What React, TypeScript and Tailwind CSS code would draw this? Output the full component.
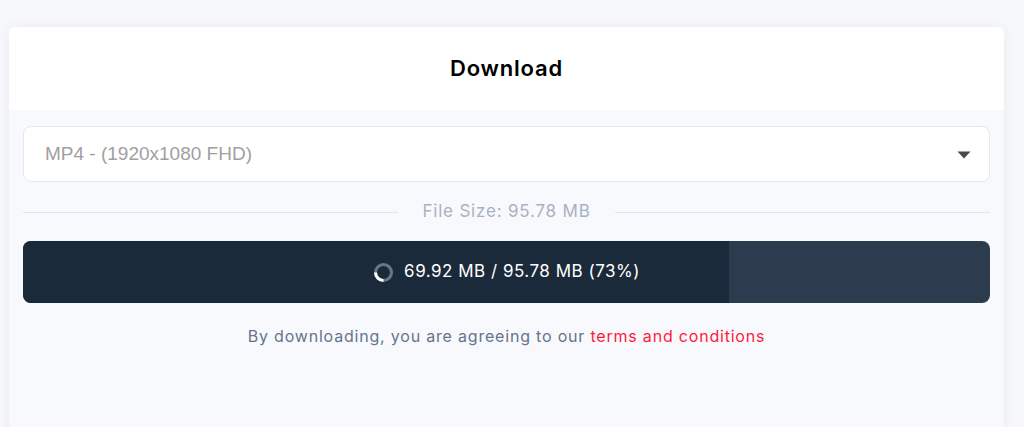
const sans = { fontFamily: "Inter, 'Open Sans', sans-serif" };

function Spinner() {
  return (
    <svg width="21" height="21" viewBox="0 0 21 21" className="shrink-0">
      <circle cx="10.5" cy="10.5" r="8" fill="none" stroke="#6b7684" strokeWidth="3" />
      <path d="M2.5 10.5 A8 8 0 0 0 10.5 18.5" fill="none" stroke="#ffffff" strokeWidth="3" />
    </svg>
  );
}

export default function App() {
  const percent = 73;
  return (
    <div className="w-[1024px] h-[427px] overflow-hidden bg-[#f7f8fb] pt-[27px] px-[9px]" style={sans}>
      <div className="w-[995px] h-[420px] rounded-t-md bg-[#f8f9fd] shadow-[0_0_14px_rgba(0,0,0,0.06)] overflow-hidden">
        {/* header */}
        <div className="h-[83px] bg-white flex items-center justify-center">
          <h2 className="text-[22px] font-semibold text-black tracking-[0.8px] pb-[1px]">Download</h2>
        </div>

        <div className="px-[14px] pt-4 flex flex-col">
          {/* quality select */}
          <div className="h-[56px] rounded-lg border border-[#e2e7f0] bg-white flex items-center justify-between pl-[21px] pr-[18px]">
            <span className="text-[19px] text-[#a0a0a0]" style={{ fontFamily: "'Liberation Sans', Arial, sans-serif" }}>
              MP4 - (1920x1080 FHD)
            </span>
            <svg width="14" height="8" viewBox="0 0 14 8" className="mt-[2px]">
              <path d="M0.5 0.5 H13.5 L7 7.5 Z" fill="#4a4a4a" />
            </svg>
          </div>

          {/* file size */}
          <div className="flex items-center gap-6 mt-[19px] h-[22px]">
            <div className="flex-1 h-px bg-[#dfe5ee]" />
            <span className="text-[17px] tracking-[0.8px] text-[#a9b2c2]">File Size: 95.78 MB</span>
            <div className="flex-1 h-px bg-[#dfe5ee]" />
          </div>

          {/* progress */}
          <div className="relative mt-[18px] h-[62px] rounded-lg bg-[#2d3b4e] overflow-hidden">
            <div className="absolute inset-y-0 left-0 bg-[#1b2a3a]" style={{ width: `${percent}%` }} />
            <div className="relative h-full flex items-center justify-center gap-[10px] text-white text-[17px] tracking-[0.5px]">
              <Spinner />
              <span>69.92 MB / 95.78 MB ({percent}%)</span>
            </div>
          </div>

          {/* terms */}
          <p className="mt-[21px] text-center text-[16px] tracking-[0.8px] text-[#64748b]">
            By downloading, you are agreeing to our{" "}
            <a href="#" className="text-[#ff1a3c]">terms and conditions</a>
          </p>
        </div>
      </div>
    </div>
  );
}
